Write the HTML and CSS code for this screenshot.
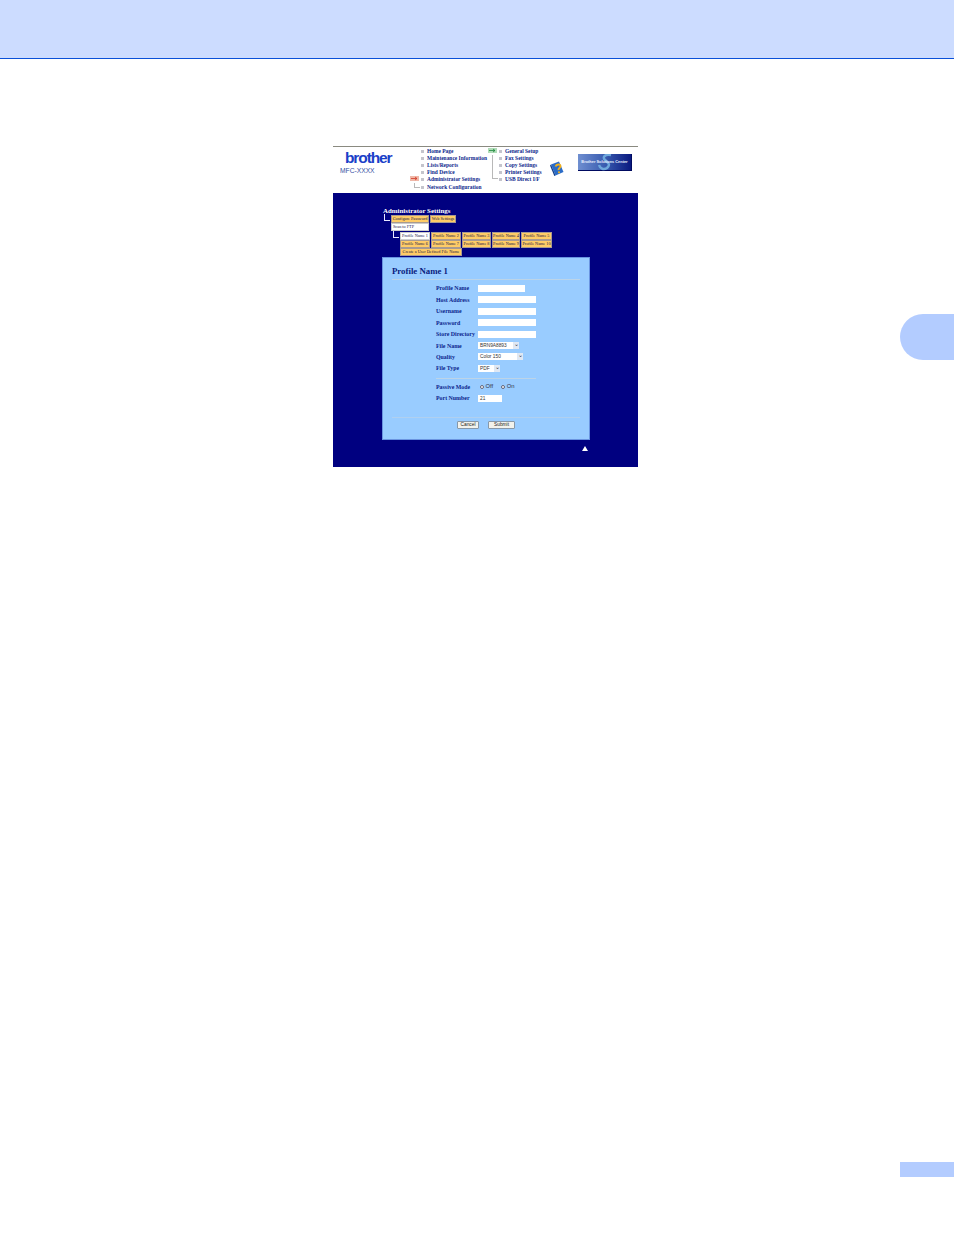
FILE: index.html
```html
<!DOCTYPE html>
<html lang="en">
<head>
<meta charset="utf-8">
<title>Profile Name 1</title>
<link rel="stylesheet" href="styles.css">
</head>
<body>
<header class="page-head"></header>
<main class="figure">
  <nav class="topnav">
    <div class="brand">
      <div class="logo">brother</div>
      <div class="model">MFC-XXXX</div>
    </div>
    <ul class="menu menu-left">
      <li><i class="slot"></i><b class="dot"></b>Home Page</li>
      <li><i class="slot"></i><b class="dot"></b>Maintenance Information</li>
      <li><i class="slot"></i><b class="dot"></b>Lists/Reports</li>
      <li><i class="slot"></i><b class="dot"></b>Find Device</li>
      <li><i class="slot"><svg class="flag" viewBox="0 0 9 5"><rect width="9" height="5" fill="#f0b8a8"/><path d="M1 2.500h6M5 1l2 1.500L5 4" stroke="#d03a2a" stroke-width=".8" fill="none"/></svg></i><b class="dot"></b>Administrator Settings</li>
      <li><i class="slot"><u class="elbow"></u></i><b class="dot"></b>Network Configuration</li>
    </ul>
    <ul class="menu menu-right">
      <li><i class="slot"><svg class="flag" viewBox="0 0 9 5"><rect width="9" height="5" fill="#b0dcb8"/><path d="M1 2.500h6M5 1l2 1.500L5 4" stroke="#1f8a3e" stroke-width=".8" fill="none"/></svg></i><b class="dot"></b>General Setup</li>
      <li><i class="slot"><u class="trunk"></u></i><b class="dot"></b>Fax Settings</li>
      <li><i class="slot"><u class="trunk"></u></i><b class="dot"></b>Copy Settings</li>
      <li><i class="slot"><u class="trunk"></u></i><b class="dot"></b>Printer Settings</li>
      <li><i class="slot"><u class="elbow short"></u></i><b class="dot"></b>USB Direct I/F</li>
    </ul>
    <svg class="help" viewBox="0 0 14 15">
      <path d="M1 3.500 9 .5l4.500 10.500-8 3.500z" fill="#2a6cc8"/>
      <path d="M1 3.500l4.500 11-1.200.4L0 4.500z" fill="#123f8a"/>
      <path d="M5.500 5.500c.8-2.600 5-2.800 5-.3 0 1.800-2.400 1.800-2 4" stroke="#f2b01c" stroke-width="1.900" fill="none"/>
      <circle cx="9" cy="11.300" r="1.100" fill="#f2b01c"/>
    </svg>
    <div class="solutions">
      <svg class="swirl" viewBox="0 0 54 17"><path d="M33 1c-6-1-9 2-6 5s6 4 2 8c-3 2-7 1-8-3" stroke="#6fa8dc" stroke-width="2.500" fill="none"/></svg>
      <span>Brother Solutions Center</span>
    </div>
  </nav>

  <section class="panel">
    <h2 class="admin">Administrator Settings</h2>
    <div class="tabrow tabs-one">
      <u class="corner"></u>
      <span class="tab w38">Configure Password</span>
      <span class="tab w26">Web Settings</span>
    </div>
    <div class="tabrow tabs-scan"><span class="tab on w38">Scan to FTP</span></div>
    <div class="tabs-profile">
      <u class="corner corner-b"></u>
      <div class="tabgrid">
        <span class="tab on">Profile Name 1</span>
        <span class="tab">Profile Name 2</span>
        <span class="tab">Profile Name 3</span>
        <span class="tab">Profile Name 4</span>
        <span class="tab">Profile Name 5</span>
        <span class="tab">Profile Name 6</span>
        <span class="tab">Profile Name 7</span>
        <span class="tab">Profile Name 8</span>
        <span class="tab">Profile Name 9</span>
        <span class="tab">Profile Name 10</span>
        <span class="tab wide">Create a User Defined File Name</span>
      </div>
    </div>

    <div class="card">
      <h1 class="card-title">Profile Name 1</h1>
      <form class="form">
        <div class="row"><label>Profile Name</label><span class="field w47"></span></div>
        <div class="row"><label>Host Address</label><span class="field w58"></span></div>
        <div class="row"><label>Username</label><span class="field w58"></span></div>
        <div class="row"><label>Password</label><span class="field w58"></span></div>
        <div class="row"><label>Store Directory</label><span class="field w58"></span></div>
        <div class="row"><label>File Name</label><span class="select w41">BRN9A8893<em>⌄</em></span></div>
        <div class="row"><label>Quality</label><span class="select w45">Color 150<em>⌄</em></span></div>
        <div class="row"><label>File Type</label><span class="select w22">PDF<em>⌄</em></span></div>
        <hr class="form-rule">
        <div class="row"><label>Passive Mode</label>
          <span class="radios"><i class="radio"></i>Off<i class="radio sel gap"></i>On</span></div>
        <div class="row"><label>Port Number</label><span class="field w24 val">21</span></div>
      </form>
      <div class="actions">
        <span class="btn cancel">Cancel</span>
        <span class="btn submit">Submit</span>
      </div>
    </div>
    <div class="up"></div>
  </section>
</main>
<div class="side-tab"></div>
<div class="page-no"></div>
</body>
</html>
```
FILE: styles.css
```css
* { box-sizing: border-box; }
html, body { margin: 0; padding: 0; height: 1235px; overflow: hidden; background: #fff; }
body { position: relative; font-family: "Liberation Serif", serif; }
ul { list-style: none; margin: 0; padding: 0; }
h1, h2 { margin: 0; }
u, i, b, em { text-decoration: none; font-style: normal; }

.page-head { height: 59px; background: #ccdcff; border-bottom: 1px solid #0a50d8; }
.figure { width: 305px; margin: 87px 0 0 333px; }

/* top navigation */
.topnav { position: relative; display: flex; height: 47px; border-top: 1px solid #8a8a80; background: #fff; }
.brand { width: 77px; padding: 4px 0 0 7px; }
.logo { margin-left: 5px; height: 14px; font: bold 15.500px/14px "Liberation Sans", sans-serif; letter-spacing: -1.100px; color: #1a40c8; }
.model { margin-top: 1px; font: 6.700px/9px "Liberation Sans", sans-serif; color: #3450a4; }
.menu { padding-top: 1px; font-size: 5.450px; font-weight: bold; color: #0c1f8c; white-space: nowrap; }
.menu li { display: flex; align-items: center; height: 7.100px; line-height: 7px; }
.menu-left { width: 78px; }
.menu-right { width: 51px; }
.slot { position: relative; display: block; flex: none; width: 9px; height: 7.100px; margin-right: 2px; }
.dot { display: block; flex: none; width: 3px; height: 3px; margin-right: 3px; background: #c4c4cc; }
.flag { position: absolute; left: 0; top: 0; width: 9px; height: 5px; }
.elbow { position: absolute; left: 4px; top: 0; width: 6px; height: 5px; border-left: 1px solid #b8b8b8; border-bottom: 1px solid #b8b8b8; }
.elbow.short { top: -1px; height: 4px; }
.trunk { position: absolute; left: 4px; top: 0; bottom: 0; border-left: 1px solid #b8b8b8; }
.help { flex: none; width: 14px; height: 15px; margin: 14px 0 0 11px; }
.solutions { position: relative; flex: none; width: 54px; height: 17px; margin: 7px 0 0 14px; background: linear-gradient(90deg, #6f8fd0, #3a5cb0 50%, #0a1a80); border-right: 1px solid #000a60; border-bottom: 1px solid #000a60; font: bold 3.900px/16px "Liberation Sans", sans-serif; color: #e8eeff; text-align: center; white-space: nowrap; }
.swirl { position: absolute; inset: 0; width: 54px; height: 17px; }
.solutions span { position: relative; }

/* blue panel */
.panel { position: relative; height: 274px; background: #000080; padding: 14px 0 0 50px; }
.admin { height: 8px; font-size: 6.900px; line-height: 7px; font-weight: bold; color: #fff; white-space: nowrap; }
.tabrow { position: relative; display: flex; gap: 1px; margin-left: 8px; }
.tabs-one { height: 8px; }
.tabs-scan { height: 9px; }
.tab { display: block; height: 7.500px; background: #ffcc66; border: 1px solid #a89a90; font-size: 4.250px; line-height: 5.500px; color: #14144a; text-align: center; white-space: nowrap; overflow: hidden; }
.tab.on { background: #fff; border-color: #ccc; }
.tabs-scan .tab { height: 8px; text-align: left; padding-left: 1px; }
.w38 { width: 38px; }
.w26 { width: 26px; }
.corner { position: absolute; width: 6px; height: 7px; left: -7px; top: -1px; border-left: 1px solid #e8e8ff; border-bottom: 1px solid #e8e8ff; }
.tabs-profile { position: relative; margin: 0 0 0 17px; }
.corner-b { left: -7px; top: -1px; }
.tabgrid { display: grid; grid-template-columns: 30px 30px 29px 28px 31px; column-gap: 1px; row-gap: .5px; width: 152px; }
.wide { grid-column: span 2; width: 62px; }

/* card */
.card { margin-top: 1px; margin-left: -1px; width: 208px; height: 183px; background: #99ccff; border: 1px solid #6a94e0; padding: 8px 9px 0; }
.card-title { height: 14px; font-size: 8.800px; line-height: 10px; font-weight: bold; color: #0a1c80; border-bottom: 1px solid #bcd4e8; white-space: nowrap; }
.form { padding: 3.250px 0 0 44px; }
.row { display: flex; align-items: center; height: 11.430px; font-size: 5.900px; font-weight: bold; color: #0c1f8c; white-space: nowrap; }
.row label { flex: none; width: 42px; }
.field { display: block; height: 7px; background: #fff; font: 4.800px/7px "Liberation Sans", sans-serif; font-weight: normal; color: #333; padding-left: 2px; }
.w47 { width: 47px; }
.w58 { width: 58px; }
.w24 { width: 24px; }
.select { position: relative; display: block; height: 7px; background: #fff; font: 4.800px/7px "Liberation Sans", sans-serif; color: #333; padding-left: 2px; }
.select em { position: absolute; right: 0; top: 0; width: 6px; height: 7px; background: #dfe8f4; color: #334; font-size: 6px; line-height: 4px; text-align: center; }
.w41 { width: 41px; }
.w45 { width: 45px; }
.w22 { width: 22px; }
.form-rule { width: 100px; height: 1px; margin: 4.300px 0 1.800px; border: 0; background: #bcd4e8; }
.radios { display: flex; align-items: center; margin-left: 2px; font: 5.800px/7px "Liberation Sans", sans-serif; color: #334; }
.radio { display: block; width: 4px; height: 4px; margin-right: 1.500px; border-radius: 50%; background: #fff; border: .5px solid #667; }
.radio.sel { background: radial-gradient(circle, #2a8a3a 35%, #fff 40%); }
.radio.gap { margin-left: 8px; }
.actions { display: flex; margin-top: 12.800px; padding: 3.500px 0 0 65px; gap: 9px; border-top: 1px solid #b0d0f0; }
.btn { display: block; height: 8px; background: #f2f2ec; border: 1px solid #8898a8; border-radius: 1px; font: 4.800px/6px "Liberation Sans", sans-serif; color: #222; text-align: center; }
.cancel { width: 22px; }
.submit { width: 27px; }
.up { position: absolute; left: 249px; top: 253px; width: 0; height: 0; border-left: 3px solid transparent; border-right: 3px solid transparent; border-bottom: 5px solid #fff; }

/* page furniture */
.side-tab { position: absolute; right: 0; top: 314px; width: 54px; height: 46px; background: #b3ccff; border-radius: 23px 0 0 23px; }
.page-no { position: absolute; right: 0; top: 1162px; width: 54px; height: 15px; background: #b3ccff; }
```
